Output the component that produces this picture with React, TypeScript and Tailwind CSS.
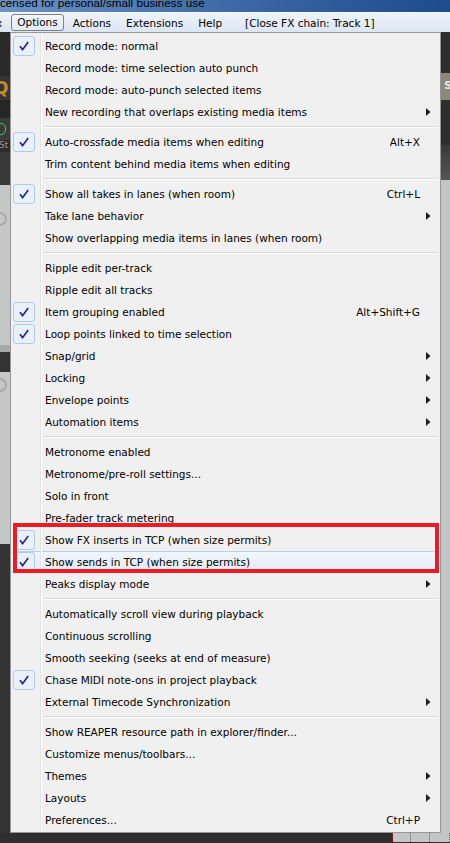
type Item = {
  label: string;
  checked?: boolean;
  shortcut?: string;
  sub?: boolean;
  hot?: boolean;
};

const groups: Item[][] = [
  [
    { label: "Record mode: normal", checked: true },
    { label: "Record mode: time selection auto punch" },
    { label: "Record mode: auto-punch selected items" },
    { label: "New recording that overlaps existing media items", sub: true },
  ],
  [
    { label: "Auto-crossfade media items when editing", checked: true, shortcut: "Alt+X" },
    { label: "Trim content behind media items when editing" },
  ],
  [
    { label: "Show all takes in lanes (when room)", checked: true, shortcut: "Ctrl+L" },
    { label: "Take lane behavior", sub: true },
    { label: "Show overlapping media items in lanes (when room)" },
  ],
  [
    { label: "Ripple edit per-track" },
    { label: "Ripple edit all tracks" },
    { label: "Item grouping enabled", checked: true, shortcut: "Alt+Shift+G" },
    { label: "Loop points linked to time selection", checked: true },
    { label: "Snap/grid", sub: true },
    { label: "Locking", sub: true },
    { label: "Envelope points", sub: true },
    { label: "Automation items", sub: true },
  ],
  [
    { label: "Metronome enabled" },
    { label: "Metronome/pre-roll settings..." },
    { label: "Solo in front" },
    { label: "Pre-fader track metering" },
    { label: "Show FX inserts in TCP (when size permits)", checked: true },
    { label: "Show sends in TCP (when size permits)", checked: true, hot: true },
    { label: "Peaks display mode", sub: true },
  ],
  [
    { label: "Automatically scroll view during playback" },
    { label: "Continuous scrolling" },
    { label: "Smooth seeking (seeks at end of measure)" },
    { label: "Chase MIDI note-ons in project playback", checked: true },
    { label: "External Timecode Synchronization", sub: true },
  ],
  [
    { label: "Show REAPER resource path in explorer/finder..." },
    { label: "Customize menus/toolbars..." },
    { label: "Themes", sub: true },
    { label: "Layouts", sub: true },
    { label: "Preferences...", shortcut: "Ctrl+P" },
  ],
];

function Check() {
  return (
    <div className="my-[1px] flex h-[20px] w-[22px] items-center justify-center rounded-[3px] border border-[#aecbef] bg-[#e9f1fb]">
      <svg width="10" height="10" viewBox="0 0 10 10">
        <path d="M1 5.2 L3.6 8.6 L9.2 1" fill="none" stroke="#1f1f98" strokeWidth="1.6" />
      </svg>
    </div>
  );
}

function Arrow() {
  return (
    <svg width="5" height="8" viewBox="0 0 5 8">
      <polygon points="0,0 4.5,4 0,8" fill="#1e1e1e" />
    </svg>
  );
}

function Row({ item }: { item: Item }) {
  return (
    <div
      className={
        "flex h-[22px] " +
        (item.hot
          ? "rounded-[3px] bg-gradient-to-b from-[#f3f7fc] to-[#e1ebf7] shadow-[inset_0_1px_0_0_#b4d0f2]"
          : "")
      }
    >
      <div className="w-[30px] shrink-0 border-r border-[#e2e3e3] pl-[2px]">
        {item.checked && <Check />}
      </div>
      <div className="flex flex-1 items-center border-l border-white pl-[3px] pt-[2px]">
        <span className="flex-1 whitespace-nowrap">{item.label}</span>
        {item.shortcut && <span className="whitespace-nowrap">{item.shortcut}</span>}
        <span className="-mt-[2px] flex w-[20px] items-center pl-[6px]">{item.sub && <Arrow />}</span>
      </div>
    </div>
  );
}

function Separator() {
  return (
    <div className="flex h-[8px]">
      <div className="w-[30px] shrink-0 border-r border-[#e2e3e3]" />
      <div className="flex-1 border-l border-white pl-[2px] pr-[2px] pt-[3px]">
        <div className="h-[2px] border-t border-b border-t-[#d9d9d9] border-b-white" />
      </div>
    </div>
  );
}

export default function App() {
  return (
    <div className="relative h-[843px] w-[450px] overflow-hidden bg-[#2e2e2e] font-['DejaVu_Sans',sans-serif] text-[10.5px] text-black">
      {/* window title */}
      <div className="h-[12px] overflow-hidden bg-gradient-to-r from-[#6d93c3] via-[#3e6ba6] to-[#1d4c8c]">
        <div className="-mt-[3px] whitespace-nowrap font-['Liberation_Sans',sans-serif] text-[11.7px] leading-[12px] text-black">
          censed for personal/small business use
        </div>
      </div>

      {/* menu bar */}
      <div className="flex h-[20px] items-start border-t border-[#f4f7fb] bg-gradient-to-b from-[#eef3fa] to-[#dce6f3]">
        <span className="-ml-[4px] mt-[3px]">x</span>
        <span className="ml-[9px] mt-[1px] flex h-[17px] items-center rounded-[3px] border border-[#7d7f83] bg-gradient-to-b from-[#f4f7fb] to-[#e3eaf4] px-[5px]">
          Options
        </span>
        <span className="ml-[9px] mt-[3px]">Actions</span>
        <span className="ml-[15px] mt-[3px]">Extensions</span>
        <span className="ml-[15px] mt-[3px]">Help</span>
        <span className="ml-[23px] mt-[3px] whitespace-nowrap">[Close FX chain: Track 1]</span>
      </div>

      <div className="flex h-[801px]">
        {/* app content to the left */}
        <div className="flex w-[10px] shrink-0 flex-col overflow-hidden">
          <div className="h-[44px] bg-[#2a2a2a]" />
          <div className="flex h-[24px] items-center bg-[#343434] text-[17px] font-bold leading-none text-[#c98a2c]">
            <span className="-ml-[6px]">Q</span>
          </div>
          <div className="h-[18px] bg-[#262626]" />
          <div className="flex h-[22px] items-center bg-[#3b3b3b]">
            <div className="-ml-[8px] h-[12px] w-[14px] rounded-[5px] border border-[#3fd34a]" />
          </div>
          <div className="flex h-[12px] items-center bg-[#2b2b2b] text-[9px] text-[#9a9a9a]">
            <span className="-ml-[1px]">St</span>
          </div>
          <div className="h-[33px] bg-[#383838]" />
          <div className="h-[160px] bg-[#c3c7c6] pt-[27px]">
            <div className="-ml-[7px] h-[14px] w-[14px] rounded-full border-2 border-[#a6aaa9]" />
          </div>
          <div className="h-[7px] bg-[#a5a9a8]" />
          <div className="h-[20px] bg-[#333333]" />
          <div className="h-[172px] bg-[#c3c7c6] pt-[6px]">
            <div className="-ml-[7px] h-[14px] w-[14px] rounded-full border-2 border-[#a6aaa9]" />
          </div>
          <div className="flex-1 bg-[#333333]" />
        </div>

        {/* the Options menu */}
        <div className="w-[431px] shrink-0 border border-[#979797] bg-[#f0f0f0] pb-[1px] pt-[2px]">
          {groups.map((g, gi) => (
            <div key={gi}>
              {gi > 0 && <Separator />}
              {g.map((item) => (
                <Row key={item.label} item={item} />
              ))}
            </div>
          ))}
        </div>

        {/* app content to the right */}
        <div className="flex flex-1 flex-col">
          <div className="h-[41px] bg-[#2e2e2e]" />
          <div className="flex h-[27px] items-center bg-[#8a877c] text-[11px] font-bold text-[#e8e8e8]">
            <span className="ml-[3px]">S</span>
          </div>
          <div className="h-[45px] bg-[#2e2e2e]" />
          <div className="h-[35px] bg-gradient-to-b from-[#3a3a3a] to-[#555555]" />
          <div className="flex-1 border-r border-dotted border-r-[#5a6360] bg-[#c3c6c4]" />
        </div>
      </div>

      {/* bottom edge */}
      <div className="flex h-[9px]">
        <div className="w-[392px] bg-[#2e2e2e]" />
        <div className="w-[1px] bg-[#7a1b1b]" />
        <div className="w-[18px] border-r border-dotted border-r-[#5a6360] bg-[#c3c6c4]" />
        <div className="w-[19px] border-r border-dotted border-r-[#5a6360] bg-[#c3c6c4]" />
        <div className="flex-1 border-r border-dotted border-r-[#5a6360] bg-[#c3c6c4]" />
      </div>

      {/* red highlight drawn over the screenshot */}
      <div className="absolute left-[13px] top-[523px] h-[50px] w-[426px] border-4 border-[#ed1c24]" />
    </div>
  );
}
